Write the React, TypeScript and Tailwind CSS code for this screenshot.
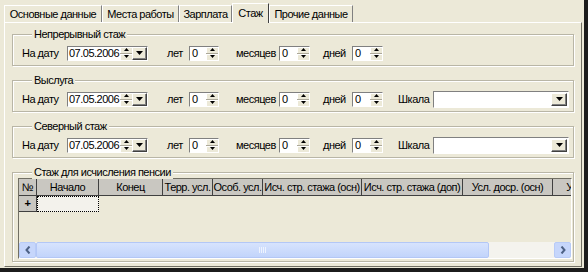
import React from 'react';

// Classic WinXP dialog page: "Стаж" tab of an employee card

const TABS = [
  { label: 'Основные данные', w: 'w-[98px]' },
  { label: 'Места работы', w: 'w-[77px]' },
  { label: 'Зарплата', w: 'w-[53px]' },
  { label: 'Стаж', w: 'w-[37px]', active: true },
  { label: 'Прочие данные', w: 'w-[84px]' },
];

const COLUMNS = [
  { label: '№', w: 'w-[18px]' },
  { label: 'Начало', w: 'w-[62px]' },
  { label: 'Конец', w: 'w-[64px]' },
  { label: 'Терр. усл.', w: 'w-[50px]' },
  { label: 'Особ. усл.', w: 'w-[50px]' },
  { label: 'Исч. стр. стажа (осн)', w: 'w-[99px]' },
  { label: 'Исч. стр. стажа (доп)', w: 'w-[101px]' },
  { label: 'Усл. доср. (осн)', w: 'w-[90px]' },
  { label: 'Усл. доср. (доп)', w: 'w-[100px]' },
];

const Up = () => (
  <svg width="5" height="3" viewBox="0 0 5 3"><path d="M2.5 0L5 3H0z" fill="#000" /></svg>
);
const Down = () => (
  <svg width="5" height="3" viewBox="0 0 5 3"><path d="M0 0h5L2.5 3z" fill="#000" /></svg>
);
const DropArrow = () => (
  <svg width="7" height="4" viewBox="0 0 7 4"><path d="M0 0h7L3.5 4z" fill="#000" /></svg>
);

function SpinButtons() {
  return (
    <div className="flex w-[12px] shrink-0 flex-col bg-[#ece9d8]">
      <div className="flex flex-1 items-center justify-center border-b border-[#aca899] shadow-[inset_1px_1px_0_#fff]">
        <Up />
      </div>
      <div className="flex flex-1 items-center justify-center shadow-[inset_1px_1px_0_#fff]">
        <Down />
      </div>
    </div>
  );
}

function SpinBox({ className }: { className: string }) {
  return (
    <div className={`flex h-[15px] shrink-0 border border-t-[#808080] border-l-[#808080] border-r-white border-b-white bg-white ${className}`}>
      <span className="flex-1 pl-[2px] leading-[13px]">0</span>
      <SpinButtons />
    </div>
  );
}

function DropButton({ className }: { className: string }) {
  return (
    <div className={`flex shrink-0 items-center justify-center border border-t-white border-l-white border-r-[#404040] border-b-[#404040] bg-[#ece9d8] shadow-[inset_-1px_-1px_0_#808080] ${className}`}>
      <DropArrow />
    </div>
  );
}

function DateBox() {
  return (
    <div className="flex h-[15px] w-[81px] shrink-0 border border-t-[#808080] border-l-[#808080] border-r-white border-b-white bg-white">
      <span className="flex-1 pl-[1px] leading-[13px]">07.05.2006</span>
      <SpinButtons />
      <DropButton className="w-[15px]" />
    </div>
  );
}

function Combo() {
  return (
    <div className="flex h-[17px] w-[136px] shrink-0 border border-t-[#808080] border-l-[#808080] border-r-white border-b-white bg-white p-px">
      <span className="flex-1" />
      <DropButton className="w-[16px]" />
    </div>
  );
}

function Group({ title, className, children }: { title: string; className: string; children: React.ReactNode }) {
  return (
    <div className={`relative border border-[#b9b6a6] shadow-[inset_1px_1px_0_#fff,1px_1px_0_#fff] ${className}`}>
      <span className="absolute -top-[7px] left-[19px] bg-[#ece9d8] px-[2px] leading-[13px]">{title}</span>
      {children}
    </div>
  );
}

function DateRow({ scale }: { scale?: boolean }) {
  return (
    <div className="flex h-[16px] items-center">
      <span className="w-[45px] shrink-0">На дату</span>
      <DateBox />
      <span className="ml-[19px] w-[22px] shrink-0">лет</span>
      <SpinBox className="w-[30px]" />
      <span className="ml-[17px] w-[43px] shrink-0">месяцев</span>
      <SpinBox className="w-[31px]" />
      <span className="ml-[13px] w-[29px] shrink-0">дней</span>
      <SpinBox className="w-[31px]" />
      {scale && (
        <>
          <span className="ml-[15px] w-[35px] shrink-0">Шкала</span>
          <Combo />
        </>
      )}
    </div>
  );
}

function Chevron({ dir }: { dir: 'left' | 'right' }) {
  return (
    <svg width="6" height="8" viewBox="0 0 6 8">
      <path
        d={dir === 'left' ? 'M4.5 0.5L1.5 4l3 3.5' : 'M1.5 0.5L4.5 4l-3 3.5'}
        fill="none"
        stroke="#4d6185"
        strokeWidth="2"
      />
    </svg>
  );
}

function ScrollBar() {
  return (
    <div className="flex h-[16px] shrink-0 bg-[#f4f3ee]">
      <div className="flex w-[17px] shrink-0 items-center justify-center rounded-[2px] border border-[#b8cbf7] bg-[#c6d6fb]">
        <Chevron dir="left" />
      </div>
      <div className="flex w-[453px] shrink-0 items-center justify-center rounded-[2px] border border-[#b3c7f6] bg-gradient-to-b from-[#d7e3fd] to-[#c2d4fb]">
        <div className="flex gap-px">
          <span className="h-[6px] w-px bg-[#eef3fe]" />
          <span className="h-[6px] w-px bg-[#eef3fe]" />
          <span className="h-[6px] w-px bg-[#eef3fe]" />
          <span className="h-[6px] w-px bg-[#eef3fe]" />
        </div>
      </div>
      <div className="flex-1" />
      <div className="flex w-[17px] shrink-0 items-center justify-center rounded-[2px] border border-[#b8cbf7] bg-[#c6d6fb]">
        <Chevron dir="right" />
      </div>
    </div>
  );
}

function PensionGrid() {
  return (
    <div className="flex h-[81px] w-[554px] flex-col overflow-hidden border border-t-[#716f64] border-l-[#716f64] border-r-white border-b-white bg-[#ece9d8]">
      <div className="flex h-[17px] shrink-0">
        {COLUMNS.map((c) => (
          <div
            key={c.label}
            className={`flex shrink-0 items-center justify-center overflow-hidden whitespace-nowrap border-r border-b border-[#404040] bg-[#c9c7c1] ${c.w}`}
          >
            {c.label}
          </div>
        ))}
      </div>
      <div className="flex h-[16px] shrink-0">
        <div className="flex w-[18px] shrink-0 items-center justify-center border-r border-b border-[#404040] bg-[#c9c7c1] font-bold">
          +
        </div>
        <div className="w-[62px] shrink-0 border border-dotted border-black bg-[#f3f2ec]" />
      </div>
      <div className="flex-1" />
      <ScrollBar />
    </div>
  );
}

export default function App() {
  return (
    <div className="flex h-[272px] w-[588px] flex-col overflow-hidden border-r-[4px] border-b-[4px] border-[#1c1c1c] bg-[#ece9d8] font-['Liberation_Sans',Arial,sans-serif] text-[11px] leading-[13px] tracking-[-0.5px] text-black">
      {/* tab strip */}
      <div className="flex h-[22px] shrink-0 items-end pl-[4px]">
        {TABS.map((t) =>
          t.active ? (
            <div
              key={t.label}
              className={`relative z-10 -mb-px flex h-[20px] shrink-0 items-center justify-center border-t border-l border-white border-r border-r-[#404040] bg-[#ece9d8] pb-px ${t.w}`}
            >
              {t.label}
            </div>
          ) : (
            <div
              key={t.label}
              className={`flex h-[17px] shrink-0 items-center justify-center border-t border-l border-white border-r border-r-[#808080] ${t.w}`}
            >
              {t.label}
            </div>
          )
        )}
      </div>

      {/* tab page */}
      <div className="ml-[4px] flex h-[245px] w-[578px] shrink-0 flex-col border border-t-white border-l-white border-r-[#716f64] border-b-[#716f64] px-[7px]">
        <Group title="Непрерывный стаж" className="mt-[11px] pt-[10px] pb-[4px] pl-[9px]">
          <DateRow />
        </Group>
        <Group title="Выслуга" className="mt-[14px] pt-[10px] pb-[4px] pl-[9px]">
          <DateRow scale />
        </Group>
        <Group title="Северный стаж" className="mt-[14px] pt-[10px] pb-[4px] pl-[9px]">
          <DateRow scale />
        </Group>
        <Group title="Стаж для исчисления пенсии" className="mt-[14px] pt-[5px] pb-[2px] pl-[5px]">
          <PensionGrid />
        </Group>
      </div>
    </div>
  );
}
